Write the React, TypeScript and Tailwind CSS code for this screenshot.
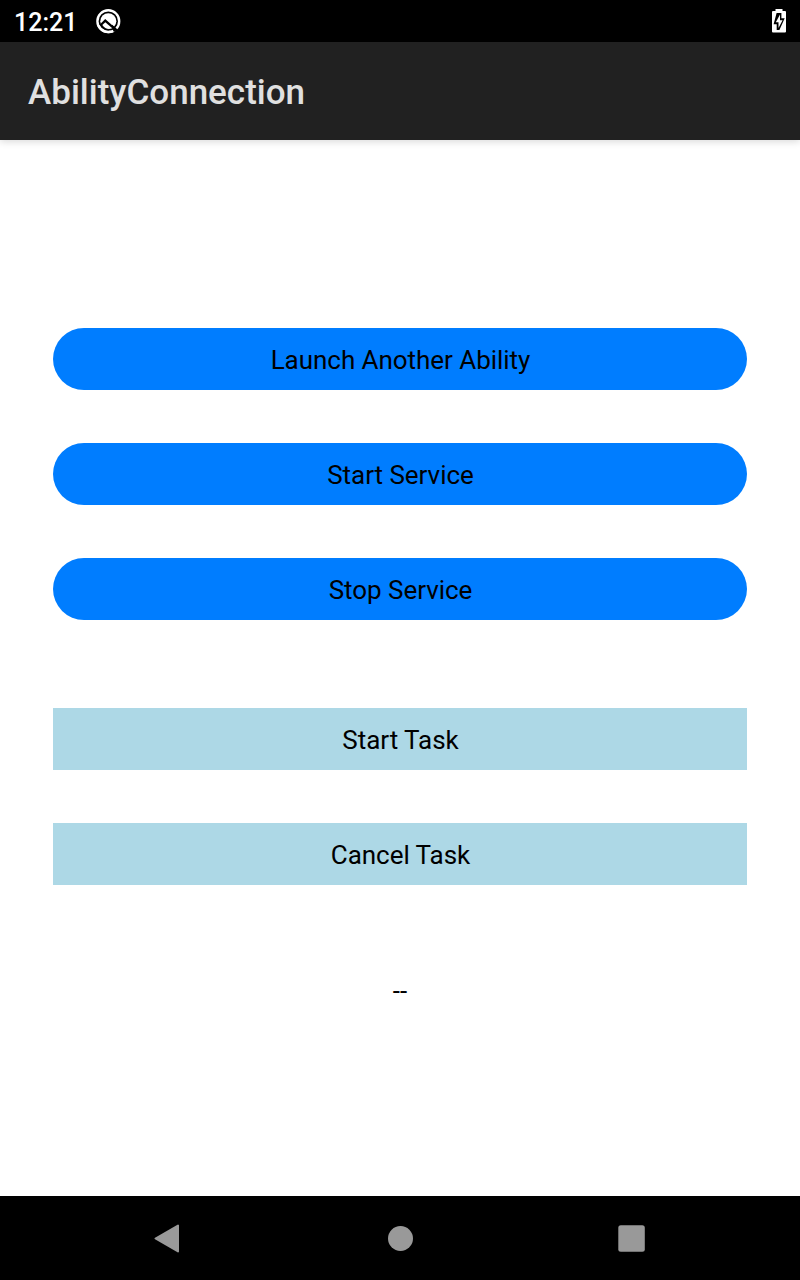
import React from "react";

const services = ["Launch Another Ability", "Start Service", "Stop Service"];
const tasks = ["Start Task", "Cancel Task"];

export default function App() {
  return (
    <div className="flex h-[1280px] w-[800px] flex-col overflow-hidden bg-white font-['Roboto',sans-serif] text-black">
      <header className="flex h-[42px] shrink-0 items-center justify-between bg-black pr-[14px] pl-[14px] text-white">
        <div className="flex items-center">
          <span className="w-[82px] pt-[4px] text-[25px] leading-[30px] font-medium">12:21</span>
          <svg width="25" height="25" viewBox="0 0 25 25" fill="none">
            <circle cx="12.300" cy="12.200" r="10.900" stroke="#fff" strokeWidth="2.400" />
            <circle cx="12.300" cy="12.200" r="8" fill="#fff" />
            <path d="M3.800 15.500L9.200 9.900L21.300 20.800L18 23L12 20.600L5 19z" fill="#000" />
            <path d="M2.500 16.500a10.900 10.900 0 0 0 14.800 5.400" stroke="#fff" strokeWidth="2.400" />
            <path d="M6.300 16L9.300 13.200L16.300 19.200C12.500 20.800 8.800 19.700 6.300 16z" fill="#fff" />
            <path d="M15.500 16.500L22 22.300" stroke="#000" strokeWidth="2" />
          </svg>
        </div>
        <svg width="14" height="24" viewBox="0 0 14 24">
          <path fill="#fff" d="M3.500 0h7v2H13a1 1 0 0 1 1 1v19.500a1 1 0 0 1-1 1H1a1 1 0 0 1-1-1V3a1 1 0 0 1 1-1h2.500z" />
          <path d="M4.600 4H9.400V9.300H12.700L7.400 21H4.700V15.300H1.600z" fill="#000" />
          <path d="M8 5.500L3.800 13.300H6.500V19L10.600 11.200H8z" fill="#fff" />
        </svg>
      </header>
      <div className="z-10 flex h-[98px] shrink-0 items-center bg-[#212121] pt-[4px] pl-[28px] text-[35px] font-medium text-[#e0e0e0] shadow-[0_2px_7px_rgba(0,0,0,0.14)]">
        AbilityConnection
      </div>
      <main className="flex flex-1 flex-col items-center px-[53px] pt-[188px] text-[26px]">
        <div className="flex w-full flex-col gap-[53px]">
          {services.map((label) => (
            <button key={label} className="h-[62px] w-full rounded-full bg-[#007dff] pt-[2px] pl-[1px] tracking-[-0.04px]">{label}</button>
          ))}
        </div>
        <div className="mt-[88px] flex w-full flex-col gap-[53px]">
          {tasks.map((label) => (
            <button key={label} className="h-[62px] w-full bg-[#add8e6] pt-[2px] pl-[1px] tracking-[-0.04px]">{label}</button>
          ))}
        </div>
        <p className="mt-[91px] leading-[31px]">--</p>
      </main>
      <nav className="flex h-[84px] shrink-0 items-center bg-black">
        <svg width="800" height="84" fill="#999">
          <path d="M155.500 42.500L178 29.500V55.500z" stroke="#999" strokeWidth="2" strokeLinejoin="round" />
          <circle cx="400.500" cy="42.500" r="12.500" />
          <rect x="618.300" y="29.300" width="26.500" height="26.500" rx="2.500" />
        </svg>
      </nav>
    </div>
  );
}
